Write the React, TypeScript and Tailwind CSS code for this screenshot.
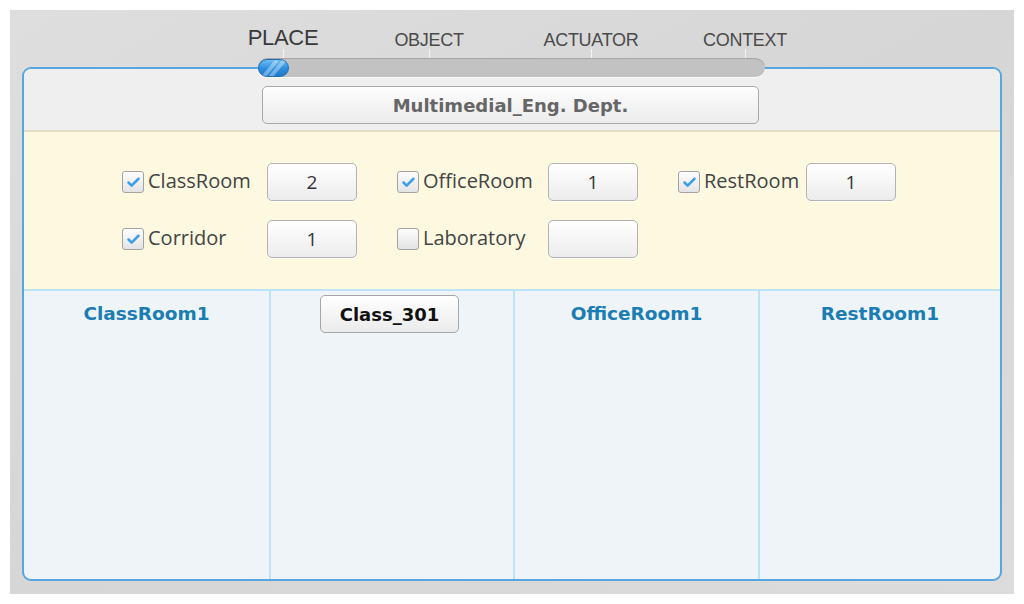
import { Check } from "lucide-react"

const tabs = [
  { label: "PLACE", width: "w-[146px]", big: true },
  { label: "OBJECT", width: "w-[146px]", big: false },
  { label: "ACTUATOR", width: "w-[178px]", big: false },
  { label: "CONTEXT", width: "w-[130px]", big: false },
]

const places = [
  { name: "ClassRoom", checked: true, count: "2" },
  { name: "OfficeRoom", checked: true, count: "1" },
  { name: "RestRoom", checked: true, count: "1" },
  { name: "Corridor", checked: true, count: "1" },
  { name: "Laboratory", checked: false, count: "" },
]

function Checkbox({ checked }: { checked: boolean }) {
  return (
    <span className="flex h-[22px] w-[22px] shrink-0 items-center justify-center rounded-[3px] border border-[#a3a3a3] bg-gradient-to-b from-[#fdfdfd] to-[#e4e4e4] shadow-[inset_0_1px_0_#fff]">
      {checked && <Check className="h-[15px] w-[15px] text-[#3a9fe6]" strokeWidth={4} />}
    </span>
  )
}

function CountBox({ value }: { value: string }) {
  return (
    <div className="flex h-[38px] w-[90px] shrink-0 items-center justify-center rounded-[5px] border border-[#b3b3b3] bg-gradient-to-b from-[#ffffff] to-[#ececec] text-[19px] text-[#333] shadow-[0_1px_0_rgba(255,255,255,0.8)]">
      {value}
    </div>
  )
}

function PlaceRow({ name, checked, count }: { name: string; checked: boolean; count: string }) {
  return (
    <div className="flex items-center">
      <Checkbox checked={checked} />
      <span className="ml-[4px] flex-1 pb-[3px] text-[20px] leading-none text-[#444]">{name}</span>
      <CountBox value={count} />
    </div>
  )
}

function Slider() {
  return (
    <div className="relative z-10 ml-[248px] flex h-[19px] w-[507px] items-center rounded-full bg-[#c2c2c2] shadow-[inset_0_1px_1px_rgba(0,0,0,0.15),0_1px_0_rgba(255,255,255,0.7)]">
      <div className="relative h-[18px] w-[31px] overflow-hidden rounded-full border border-[#1e6fb8] bg-gradient-to-b from-[#6cbcf3] via-[#2f91e0] to-[#1f78c9]">
        <span className="absolute left-[9px] top-[-2px] h-[22px] w-[4px] rotate-[40deg] bg-white/35" />
        <span className="absolute left-[16px] top-[-2px] h-[22px] w-[4px] rotate-[40deg] bg-white/35" />
      </div>
    </div>
  )
}

export default function App() {
  return (
    <div className="h-[604px] w-[1024px] bg-white p-[10px]" style={{ fontFamily: '"Open Sans", "DejaVu Sans", sans-serif' }}>
      <div className="flex h-[584px] w-[1004px] flex-col bg-gradient-to-br from-[#dedede] via-[#d6d6d6] to-[#dcdcdc]">
        <div className="ml-[200px] flex h-[48px] items-end" style={{ fontFamily: '"Liberation Sans", Arial, sans-serif' }}>
          {tabs.map((t) => (
            <div key={t.label} className={`${t.width} flex flex-col items-center`}>
              <span className={t.big ? "text-[22px] leading-none tracking-[-0.3px] text-[#3a3a3a]" : "text-[18px] leading-none tracking-[-0.3px] text-[#4a4a4a]"}>
                {t.label}
              </span>
              <span className="h-[9px] w-px bg-[#f4f4f4]" />
            </div>
          ))}
        </div>

        <Slider />

        <div className="-mt-[10px] ml-[12px] flex h-[514px] w-[980px] flex-col overflow-hidden rounded-[9px] border-2 border-[#56a6e0] bg-[#eff4f9]">
          <div className="flex h-[63px] shrink-0 justify-center border-b-2 border-[#e2dec4] bg-[#efefef] pt-[17px]">
            <div className="ml-[-3px] flex h-[38px] w-[497px] items-center justify-center rounded-[5px] border border-[#a9a9a9] bg-gradient-to-b from-[#fdfdfd] to-[#ececec] text-[18px] font-bold text-[#666]" style={{ fontFamily: '"DejaVu Sans", sans-serif' }}>
              Multimedial_Eng. Dept.
            </div>
          </div>

          <div className="grid h-[159px] shrink-0 grid-cols-[235px_241px_218px] content-center gap-x-[40px] gap-y-[19px] border-b-2 border-[#bfe3f6] bg-[#fdf9e0] pl-[98px]">
            {places.map((p) => (
              <PlaceRow key={p.name} {...p} />
            ))}
          </div>

          <div className="grid flex-1 grid-cols-[247px_244px_245px_1fr]" style={{ fontFamily: '"DejaVu Sans", sans-serif' }}>
            <div className="flex justify-center border-r-2 border-[#bfe3f6] pt-[4px]">
              <div className="flex h-[38px] items-center text-[18.5px] font-bold text-[#1a7db3]">ClassRoom1</div>
            </div>
            <div className="flex justify-center border-r-2 border-[#bfe3f6] pt-[4px]">
              <div className="ml-[-5px] flex h-[38px] w-[139px] items-center justify-center rounded-[5px] border border-[#a6a6a6] bg-gradient-to-b from-[#ffffff] to-[#ebebeb] text-[18px] font-bold text-[#111]">
                Class_301
              </div>
            </div>
            <div className="flex justify-center border-r-2 border-[#bfe3f6] pt-[4px]">
              <div className="flex h-[38px] items-center text-[18.5px] font-bold text-[#1a7db3]">OfficeRoom1</div>
            </div>
            <div className="flex justify-center pt-[4px]">
              <div className="flex h-[38px] items-center text-[18.5px] font-bold text-[#1a7db3]">RestRoom1</div>
            </div>
          </div>
        </div>
      </div>
    </div>
  )
}
